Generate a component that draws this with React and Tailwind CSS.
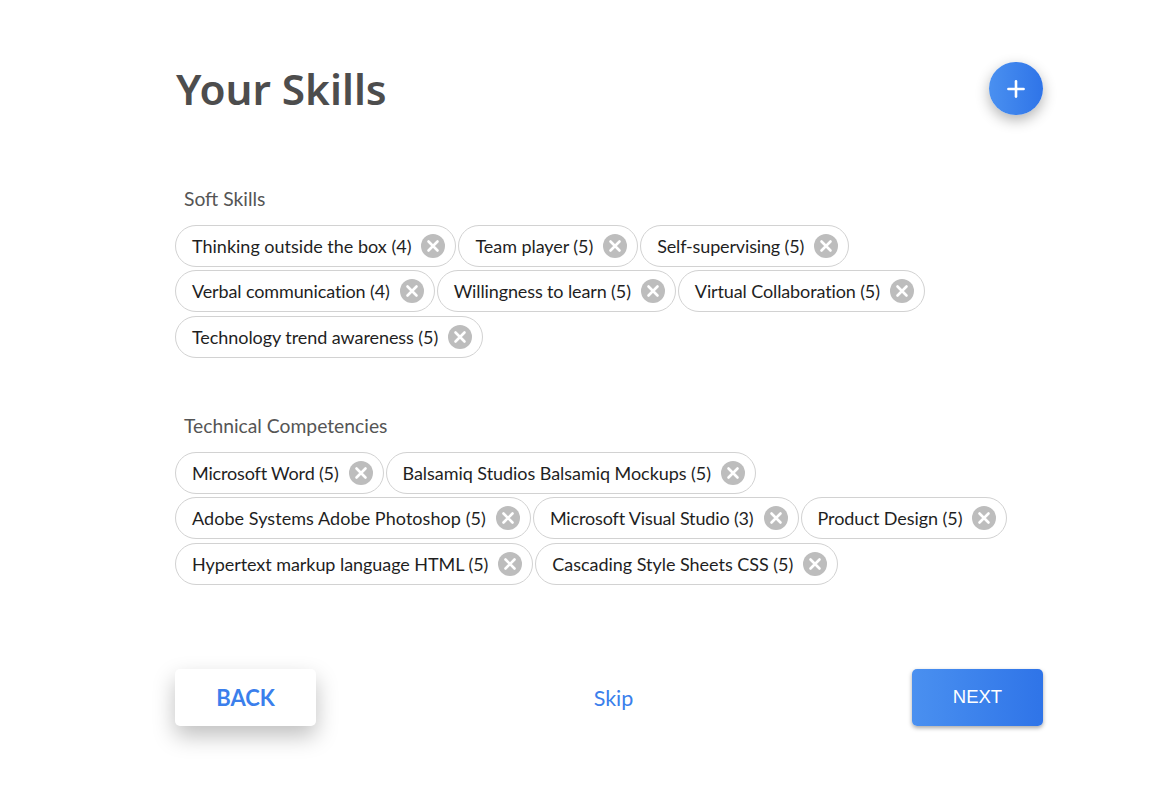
import { Plus } from 'lucide-react';

const softSkills = [
  { label: 'Thinking outside the box (4)', fit: 'tracking-normal' },
  { label: 'Team player (5)', fit: 'tracking-[-0.07px]' },
  { label: 'Self-supervising (5)', fit: 'tracking-[-0.15px]' },
  { label: 'Verbal communication (4)', fit: 'tracking-[-0.12px]' },
  { label: 'Willingness to learn (5)', fit: 'tracking-[-0.12px]' },
  { label: 'Virtual Collaboration (5)', fit: 'tracking-[-0.12px]' },
  { label: 'Technology trend awareness (5)', fit: 'tracking-[-0.07px]' },
];

const technical = [
  { label: 'Microsoft Word (5)', fit: 'tracking-[-0.17px]' },
  { label: 'Balsamiq Studios Balsamiq Mockups (5)', fit: 'tracking-[-0.05px]' },
  { label: 'Adobe Systems Adobe Photoshop (5)', fit: 'tracking-[0.06px]' },
  { label: 'Microsoft Visual Studio (3)', fit: 'tracking-[-0.15px]' },
  { label: 'Product Design (5)', fit: 'tracking-[-0.06px]' },
  { label: 'Hypertext markup language HTML (5)', fit: 'tracking-[-0.06px]' },
  { label: 'Cascading Style Sheets CSS (5)', fit: 'tracking-[-0.03px]' },
];

function Chip({ label, fit }) {
  return (
    <div className="flex h-[42px] items-center rounded-full border border-[#d2d2d2] bg-white pl-4 pr-[9px]">
      <span className={`text-[18px] leading-none text-[#1f1f1f] ${fit}`}>{label}</span>
      <svg className="ml-[9px]" width="26" height="26" viewBox="0 0 26 26">
        <circle cx="13" cy="13" r="12" fill="#bdbdbd" />
        <path d="M8.5 8.5l9 9M17.5 8.5l-9 9" stroke="#fff" strokeWidth="2.6" strokeLinecap="round" />
      </svg>
    </div>
  );
}

function SkillGroup({ title, skills }) {
  return (
    <section>
      <h2 className="mb-[14px] pl-[9px] text-[19.3px] leading-[24px] text-[#555]">{title}</h2>
      <div className="flex flex-wrap gap-x-[2px] gap-y-[3.4px]">
        {skills.map((s) => (
          <Chip key={s.label} label={s.label} fit={s.fit} />
        ))}
      </div>
    </section>
  );
}

export default function App() {
  return (
    <div className="h-[800px] w-[1160px] overflow-hidden bg-white font-['Lato',sans-serif]">
      <div className="ml-[175px] w-[868px] pt-[62px]">
        <div className="flex h-[53px] items-center justify-between">
          <h1 className="mt-[2px] pl-px font-['Noto_Sans',sans-serif] text-[42.3px] font-semibold leading-none text-[#4d4d4d]">Your Skills</h1>
          <button className="flex h-[53px] w-[54px] items-center justify-center rounded-full bg-gradient-to-r from-[#4a90f0] to-[#2f74e8] text-white shadow-[0_5px_14px_rgba(0,0,0,0.3)]">
            <Plus size={26} strokeWidth={2.4} />
          </button>
        </div>

        <div className="mt-[72px] flex flex-col gap-[56px]">
          <SkillGroup title="Soft Skills" skills={softSkills} />
          <SkillGroup title="Technical Competencies" skills={technical} />
        </div>

        <div className="mt-[84px] flex items-center justify-between">
          <button className="h-[57px] w-[141px] rounded-[5px] bg-white text-[22px] font-bold text-[#3b7fec] shadow-[0_10px_22px_rgba(0,0,0,0.25)]">BACK</button>
          <a className="ml-[-1px] mt-[2px] text-[21.5px] text-[#3b7fec]">Skip</a>
          <button className="h-[57px] w-[131px] rounded-[5px] bg-gradient-to-r from-[#4a90f0] to-[#2f74e8] font-['Liberation_Sans',sans-serif] text-[18.5px] text-white shadow-[0_2px_4px_rgba(0,0,0,0.35)]">NEXT</button>
        </div>
      </div>
    </div>
  );
}
